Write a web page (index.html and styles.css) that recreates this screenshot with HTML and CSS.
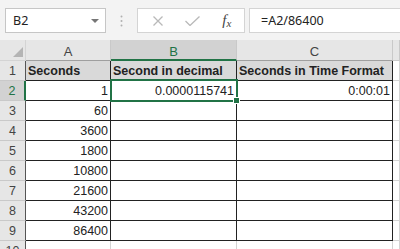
FILE: index.html
```html
<!DOCTYPE html>
<html lang="en">
<head>
    <meta charset="UTF-8">
    <title>Seconds to time</title>
    <link rel="stylesheet" href="styles.css">
</head>
<body>
    <div class="topbar">
        <div class="namebox">
            <span>B2</span>
            <svg class="caret" viewBox="0 0 8 4"><path d="M0 0h8L4 4z"/></svg>
        </div>
        <div class="grip">
            <svg viewBox="0 0 3 12"><circle cx="1.5" cy="1.5" r="1"/><circle cx="1.5" cy="6" r="1"/><circle cx="1.5" cy="10.5" r="1"/></svg>
        </div>
        <div class="fxbtns">
            <span class="btn">
                <svg viewBox="0 0 10 10"><path d="M0.5 0.5l9 9M9.5 0.5l-9 9"/></svg>
            </span>
            <span class="btn">
                <svg class="tick" viewBox="0 0 15 10"><path d="M0.5 5l4.5 4.5L14.5 0.5"/></svg>
            </span>
            <span class="btn fx">f<small>x</small></span>
        </div>
        <div class="formula">=A2/86400</div>
    </div>

    <div class="sheet">
        <!-- column headers -->
        <div class="corner"><svg viewBox="0 0 10 10"><path d="M10 0v10H0z"/></svg></div>
        <div class="hd">A</div>
        <div class="hd on">B</div>
        <div class="hd">C</div>
        <div class="hd last"></div>

        <div class="rh">1</div>
        <div class="c t th">Seconds</div>
        <div class="c t th">Second in decimal</div>
        <div class="c t th">Seconds in Time Format</div>
        <div class="c"></div>

        <div class="rh on">2</div>
        <div class="c t num">1</div>
        <div class="c t num sel">0.0000115741</div>
        <div class="c t num">0:00:01</div>
        <div class="c"></div>

        <div class="rh">3</div>
        <div class="c t num">60</div>
        <div class="c t"></div>
        <div class="c t"></div>
        <div class="c"></div>

        <div class="rh">4</div>
        <div class="c t num">3600</div>
        <div class="c t"></div>
        <div class="c t"></div>
        <div class="c"></div>

        <div class="rh">5</div>
        <div class="c t num">1800</div>
        <div class="c t"></div>
        <div class="c t"></div>
        <div class="c"></div>

        <div class="rh">6</div>
        <div class="c t num">10800</div>
        <div class="c t"></div>
        <div class="c t"></div>
        <div class="c"></div>

        <div class="rh">7</div>
        <div class="c t num">21600</div>
        <div class="c t"></div>
        <div class="c t"></div>
        <div class="c"></div>

        <div class="rh">8</div>
        <div class="c t num">43200</div>
        <div class="c t"></div>
        <div class="c t"></div>
        <div class="c"></div>

        <div class="rh">9</div>
        <div class="c t num">86400</div>
        <div class="c t"></div>
        <div class="c t"></div>
        <div class="c"></div>

        <div class="rh">10</div>
        <div class="c"></div>
        <div class="c"></div>
        <div class="c"></div>
        <div class="c"></div>
    </div>
</body>
</html>
```

FILE: styles.css
```css
body {
    margin: 0;
    background-color: #f3f3f3;
    font-family: "Liberation Sans", Arial, sans-serif;
    overflow: hidden;
}

/* formula bar */
.topbar {
    display: flex;
    height: 40px;
    padding: 8px 0 0 5px;
    box-sizing: border-box;
    font-family: "Noto Sans", sans-serif;
    font-size: 12.5px;
    color: #222;
}

.namebox {
    width: 101px;
    height: 25px;
    box-sizing: border-box;
    display: flex;
    align-items: center;
    justify-content: space-between;
    padding: 0 6px 0 7px;
    background-color: #fff;
    border: 1px solid #c6c6c6;
}

.caret {
    width: 8px;
    height: 4px;
    fill: #767676;
}

.grip {
    width: 31px;
    display: flex;
    justify-content: center;
    align-items: center;
    height: 25px;
}

.grip svg {
    width: 3px;
    height: 12px;
    fill: #b0b0b0;
}

.fxbtns {
    width: 108px;
    height: 25px;
    box-sizing: border-box;
    display: flex;
    padding-left: 3px;
    background-color: #fff;
    border: 1px solid #d4d4d4;
}

.btn {
    width: 35px;
    display: flex;
    justify-content: center;
    align-items: center;
}

.btn svg {
    width: 10px;
    height: 10px;
    fill: none;
    stroke: #b9b9b9;
    stroke-width: 1.3;
}

.btn svg.tick {
    width: 15px;
}

.fx {
    font-family: "Liberation Serif", serif;
    font-style: italic;
    font-size: 15px;
    color: #444;
}

.fx small {
    font-size: 11px;
    margin-top: 4px;
}

.formula {
    flex: 1;
    height: 25px;
    margin-left: 4px;
    box-sizing: border-box;
    padding-left: 11px;
    line-height: 23px;
    background-color: #fff;
    border: 1px solid #d4d4d4;
    border-right: none;
}

/* worksheet grid */
.sheet {
    display: grid;
    grid-template-columns: 26px 85px 126px 156px 1fr;
    grid-template-rows: 21px repeat(10, 20px);
    background-color: #fff;
    font-size: 12.5px;
    color: #222;
}

.sheet > div {
    box-sizing: border-box;
    border-right: 1px solid #d4d4d4;
    border-bottom: 1px solid #d4d4d4;
}

.corner {
    background-color: #e6e6e6;
    display: flex;
    justify-content: flex-end;
    align-items: flex-end;
    padding: 0 2px 3px 0;
}

.corner svg {
    width: 10px;
    height: 10px;
    fill: #b4b4b4;
}

.hd {
    background-color: #e6e6e6;
    color: #444;
    font-size: 13px;
    text-align: center;
    line-height: 23px;
}

.sheet > .hd {
    border-right-color: #c9c9c9;
    border-bottom-color: #9f9f9f;
}

.sheet > .hd.last {
    border-bottom-color: #c9c9c9;
}

.sheet > .hd.on {
    background-color: #d2d2d2;
    color: #217346;
    border-bottom: 2px solid #217346;
}

.rh {
    background-color: #e6e6e6;
    color: #444;
    text-align: center;
    line-height: 21px;
}

.sheet > .rh {
    border-right-color: #555;
    border-bottom-color: #c9c9c9;
}

.sheet > .rh.on {
    background-color: #d2d2d2;
    color: #217346;
    border-right: 2px solid #217346;
}

.sheet > .rh:last-of-type {
    border-right-color: #c9c9c9;
}

.c {
    padding: 0 2px;
    line-height: 20px;
    white-space: nowrap;
}

.sheet > .t {
    border-right-color: #222;
    border-bottom-color: #222;
}

.th {
    background-color: #d9d9d9;
    font-weight: bold;
}

.num {
    text-align: right;
}

/* active cell outline and fill handle */
.sel {
    position: relative;
}

.sel::after {
    content: "";
    position: absolute;
    left: -1px;
    top: -2px;
    right: -2px;
    bottom: -2px;
    border: 2px solid #217346;
}

.sel::before {
    content: "";
    position: absolute;
    right: -4px;
    bottom: -4px;
    width: 5px;
    height: 5px;
    background-color: #217346;
    border: 1px solid #fff;
    z-index: 1;
}
```
